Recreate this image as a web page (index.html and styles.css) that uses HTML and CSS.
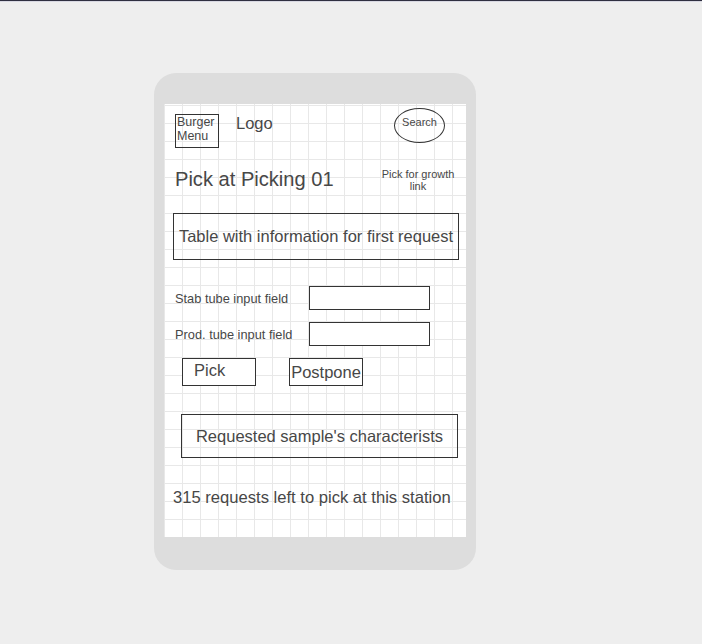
FILE: index.html
```html
<!doctype html>
<html>
<head>
  <title>Pick at Picking 01</title>
  <link rel="stylesheet" href="styles.css">
</head>
<body>
  <div class="topline"></div>
  <div class="phone">
    <div class="screen">
      <div class="header">
        <div class="burger">Burger<br>Menu</div>
        <div class="logo">Logo</div>
        <div class="search">Search</div>
      </div>

      <div class="title-row">
        <h1 class="title">Pick at Picking 01</h1>
        <a class="growth-link">Pick for growth link</a>
      </div>

      <div class="box table-box">Table with information for first request</div>

      <div class="field first">
        <label for="stab">Stab tube input field</label>
        <input id="stab" type="text">
      </div>
      <div class="field">
        <label for="prod">Prod. tube input field</label>
        <input id="prod" type="text">
      </div>

      <div class="buttons">
        <button class="btn btn-pick">Pick</button>
        <button class="btn btn-postpone">Postpone</button>
      </div>

      <div class="box sample-box">Requested sample's characterists</div>

      <p class="left">315 requests left to pick at this station</p>
    </div>
  </div>
</body>
</html>
```

FILE: styles.css
```css
html, body { margin: 0; padding: 0; }
body { background: #eeeeee; font-family: "Liberation Sans", Arial, sans-serif; color: #474747; }
.topline { height: 1px; background: #2f2f40; border-bottom: 1px solid #d8d8e2; }

.phone { width: 322px; height: 497px; margin: 71px 0 0 154px; padding: 31px 10px 33px; box-sizing: border-box; background: #dddddd; border-radius: 22px; }
.screen {
  height: 433px; padding-left: 11px; box-sizing: border-box; overflow: hidden;
  background-color: #fff;
  background-image: linear-gradient(to right, #e8e8e8 1px, transparent 1px), linear-gradient(to bottom, #e8e8e8 1px, transparent 1px);
  background-size: 18px 18px;
  background-position: 0 1px;
}

.header { display: flex; align-items: flex-start; padding-top: 10px; }
.burger { width: 41px; height: 32px; border: 1px solid #333; font-size: 12.5px; line-height: 14px; padding: 0 0 0 1px; }
.logo { margin: 0 0 0 17px; font-size: 16.5px; line-height: 18px; }
.search { margin: -6px 21px 0 auto; width: 51px; height: 35px; border: 1px solid #333; border-radius: 50%; box-sizing: border-box; padding-top: 7px; font-size: 11px; line-height: 12px; text-align: center; }

.title-row { display: flex; align-items: flex-start; margin-top: 18px; }
.title { margin: 0; padding-top: 1px; font-size: 20.1px; line-height: 24px; font-weight: normal; }
.growth-link { margin: 2px 8px 0 auto; width: 80px; font-size: 11px; line-height: 12px; text-align: center; color: #474747; }

.box { display: flex; align-items: center; justify-content: center; border: 1px solid #333; box-sizing: border-box; font-size: 16.5px; }
.table-box { width: 286px; height: 47px; margin: 21px 0 0 -2px; }

.field { display: flex; align-items: center; margin-top: 12px; }
.field.first { margin-top: 26px; }
.field label { width: 134px; font-size: 12.8px; }
.field input { width: 121px; height: 24px; margin: 0; padding: 0; border: 1px solid #333; box-sizing: border-box; background: #fff; }

.buttons { display: flex; gap: 33px; margin: 12px 0 0 7px; }
.btn { width: 74px; height: 28px; margin: 0; border: 1px solid #333; background: #fff; font-family: inherit; font-size: 16.5px; color: #474747; box-sizing: border-box; }
.btn-pick { text-align: left; padding: 0 0 4px 11px; }
.btn-postpone { padding: 0; text-align: center; }

.sample-box { width: 277px; height: 44px; margin: 28px 0 0 6px; }

.left { margin: 31px 0 0 -2px; font-size: 16.6px; line-height: 18px; }
```
